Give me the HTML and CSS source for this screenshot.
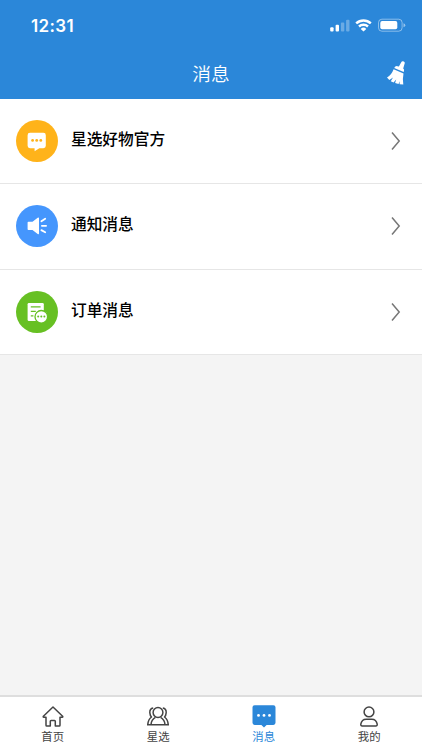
FILE: index.html
```html
<!DOCTYPE html>
<html lang="zh-CN">
<head>
<meta charset="utf-8">
<title>消息</title>
<link rel="stylesheet" href="styles.css">
</head>
<body>
<div class="app">
  <header class="header">
    <div class="status">
      <span class="time">12:31</span>
      <svg class="indicators" width="78" height="16" viewBox="0 0 78 16" fill="#fff">
        <rect x="1.2" y="9.3" width="3.4" height="4.2" rx="1"/>
        <rect x="6.6" y="6.8" width="3.4" height="6.7" rx="1"/>
        <rect x="11.9" y="4.4" width="3.4" height="9.1" rx="1" opacity=".3"/>
        <rect x="17.1" y="1.8" width="3.4" height="11.7" rx="1" opacity=".3"/>
        <g fill="none" stroke="#fff" stroke-width="2.4">
          <path d="M27.2 5.4a10.6 10.6 0 0 1 14.6 0"/>
          <path d="M30 8.5a6.6 6.6 0 0 1 9 0"/>
        </g>
        <path d="M31.7 10.9a4 4 0 0 1 5.6 0L34.5 13.6z"/>
        <rect x="49.5" y="1.2" width="23.6" height="12" rx="3.4" fill="none" stroke="#fff" stroke-opacity=".45"/>
        <rect x="51.3" y="3.1" width="17" height="8.2" rx="1.8"/>
        <path d="M74.5 5.2q1.8.6 1.8 2t-1.8 2z" opacity=".5"/>
      </svg>
    </div>
    <div class="navbar">
      <h1 class="title">消息</h1>
      <svg class="broom" width="22" height="26" viewBox="0 0 22 26" fill="#fff">
        <path d="M15.1 2.5Q15.7 1 17.2 1.2Q19 1.5 18.8 3.1L17.2 8.4Q18.4 9.3 18 10.8L17.7 12L8.2 8Q9.3 5.7 11.5 6.2L12.9 6.5Z"/>
        <path d="M7.6 9.2L17.5 13.4Q16.4 18.5 17.3 24.6L13.7 24.2L13.4 21.2L12.6 24L9.1 23.1L10.2 19.4L7.5 22.5L4.8 21.2L7 17.5L3.3 20.1L1 17.5Q5.6 14.8 7.6 9.2Z"/>
      </svg>
    </div>
  </header>

  <main class="list">
    <div class="row">
      <svg class="avatar" viewBox="0 0 42 42">
        <circle cx="21" cy="21" r="21" fill="#ffb31a"/>
        <path d="M14 12.8h13.4a2.4 2.4 0 0 1 2.4 2.4v10.6a2.4 2.4 0 0 1-2.4 2.4h-4.1L18.6 31.2v-3H14a2.4 2.4 0 0 1-2.4-2.4V15.2a2.4 2.4 0 0 1 2.4-2.4z" fill="#fff"/>
        <g fill="#ffb31a"><circle cx="16.6" cy="20.4" r="1.4"/><circle cx="20.7" cy="20.4" r="1.4"/><circle cx="24.8" cy="20.4" r="1.4"/></g>
      </svg>
      <span class="name">星选好物官方</span>
      <svg class="arrow" viewBox="0 0 10 20"><path d="M1 1.5L8.2 10L1 18.5"/></svg>
    </div>
    <div class="row">
      <svg class="avatar" viewBox="0 0 42 42">
        <circle cx="21" cy="21" r="21" fill="#4596fd"/>
        <path d="M12.4 16.7h4.1l5.2-3.9q1.3-.8 1.3.6v14.9q0 1.5-1.3.6l-5.2-3.9h-4.1q-.8 0-.8-.8v-6.7q0-.8.8-.8z" fill="#fff"/>
        <path d="M25.4 16.2l3.8-2.5M25.9 20.8h4.2M25.4 25.1l3.8 2.2" fill="none" stroke="#fff" stroke-width="1.8" stroke-linecap="round"/>
      </svg>
      <span class="name">通知消息</span>
      <svg class="arrow" viewBox="0 0 10 20"><path d="M1 1.5L8.2 10L1 18.5"/></svg>
    </div>
    <div class="row">
      <svg class="avatar" viewBox="0 0 42 42">
        <circle cx="21" cy="21" r="21" fill="#67c023"/>
        <rect x="11.6" y="12" width="16.2" height="18" rx="1.3" fill="#fff"/>
        <path d="M14.8 15.8h9.8M14.8 20.4h5M14.8 24.9h2.6" stroke="#67c023" stroke-width="1.3"/>
        <circle cx="25.3" cy="25.8" r="6.3" fill="#fff" stroke="#67c023" stroke-width="1.3"/>
        <g fill="#67c023"><circle cx="22.2" cy="25.6" r="1"/><circle cx="25.3" cy="25.6" r="1"/><circle cx="28.4" cy="25.6" r="1"/></g>
      </svg>
      <span class="name">订单消息</span>
      <svg class="arrow" viewBox="0 0 10 20"><path d="M1 1.5L8.2 10L1 18.5"/></svg>
    </div>
  </main>

  <nav class="tabs">
    <div class="tab">
      <svg class="tab-icon" viewBox="0 0 24 24">
        <path d="M12 2L2.4 11.2Q1.8 12.2 2.8 12.2H5V20.2Q5 21 5.8 21H9.3V16.2Q9.3 15.4 10.1 15.4H13.5Q14.3 15.4 14.3 16.2V21H18.2Q19 21 19 20.2V12.2H21.2Q22.2 12.2 21.6 11.2Z"/>
      </svg>
      <span>首页</span>
    </div>
    <div class="tab">
      <svg class="tab-icon" viewBox="0 0 24 24">
        <circle cx="12" cy="7.5" r="4.9"/>
        <path d="M1 19.8H23M5 19.6Q5.3 14.8 9.4 12.4M14.6 12.4Q18.7 14.8 19 19.6M7.2 2.9Q3.6 3.5 3.8 7.6Q4 10.5 5.5 12Q2.2 14.4 1.8 19.4M16.8 2.9Q20.4 3.5 20.2 7.6Q20 10.5 18.5 12Q21.8 14.4 22.2 19.4"/>
      </svg>
      <span>星选</span>
    </div>
    <div class="tab active">
      <svg class="tab-icon" viewBox="0 0 24 24">
        <path class="bubble" d="M2.6 .2H21.4Q23.5 .2 23.5 2.3V17.8Q23.5 19.9 21.4 19.9H14.6L12 22.6L9.4 19.9H2.6Q.5 19.9 .5 17.8V2.3Q.5 .2 2.6 .2Z"/>
        <g class="dots"><circle cx="6.5" cy="10.4" r="1.4"/><circle cx="12" cy="10.4" r="1.4"/><circle cx="17.5" cy="10.4" r="1.4"/></g>
      </svg>
      <span>消息</span>
    </div>
    <div class="tab">
      <svg class="tab-icon" viewBox="0 0 24 24">
        <circle cx="12" cy="6.9" r="4.9"/>
        <path d="M5.2 21H18.8Q20.4 21 20.2 19.2Q19.3 14.2 14.8 14.2H9.2Q4.7 14.2 3.8 19.2Q3.6 21 5.2 21Z"/>
      </svg>
      <span>我的</span>
    </div>
  </nav>
</div>
</body>
</html>
```
FILE: styles.css
```css
* { box-sizing: border-box; }

body {
  margin: 0;
  font-family: "Noto Sans CJK SC", sans-serif;
}

.app {
  display: flex;
  flex-direction: column;
  width: 422px;
  height: 750px;
  background: #f4f4f4;
}

.header {
  height: 99px;
  background: #2b87d9;
  color: #fff;
}

.status {
  display: flex;
  align-items: center;
  justify-content: space-between;
  height: 49px;
  padding: 3px 15px 0 31px;
}

.time {
  font: 600 17px/20px Inter, sans-serif;
  letter-spacing: .35px;
}

.navbar {
  display: grid;
  grid-template-columns: 1fr auto 1fr;
  align-items: center;
  height: 50px;
  padding: 0 14px 2px;
}

.title {
  grid-column: 2;
  margin: 0;
  font-size: 18.7px;
  font-weight: 350;
  line-height: 28px;
}

.broom {
  justify-self: end;
}

.list {
  flex: 1;
}

.row {
  display: flex;
  align-items: center;
  height: 85.3px;
  padding: 0 21px 0 16px;
  background: #fff;
  border-bottom: 1px solid #e6e6e6;
}

.avatar {
  width: 42px;
  height: 42px;
}

.name {
  flex: 1;
  margin: 0 0 4px 13px;
  color: #000;
  font-size: 15.7px;
  font-weight: 500;
  line-height: 24px;
}

.arrow {
  width: 10px;
  height: 20px;
  fill: none;
  stroke: #777;
  stroke-width: 1.5;
}

.tabs {
  display: flex;
  height: 55px;
  background: #fff;
  border-top: 2px solid #dedede;
}

.tab {
  flex: 1;
  display: flex;
  flex-direction: column;
  align-items: center;
  padding-top: 8px;
  color: #444;
  font-size: 11.4px;
  line-height: 14px;
}

.tab-icon {
  width: 24px;
  height: 24px;
  fill: none;
  stroke: #444;
  stroke-width: 1.5;
  stroke-linejoin: round;
}

.active { color: #2b87d9; }

.bubble {
  fill: #2b87d9;
  stroke: none;
}

.dots {
  fill: #fff;
  stroke: none;
}
```
